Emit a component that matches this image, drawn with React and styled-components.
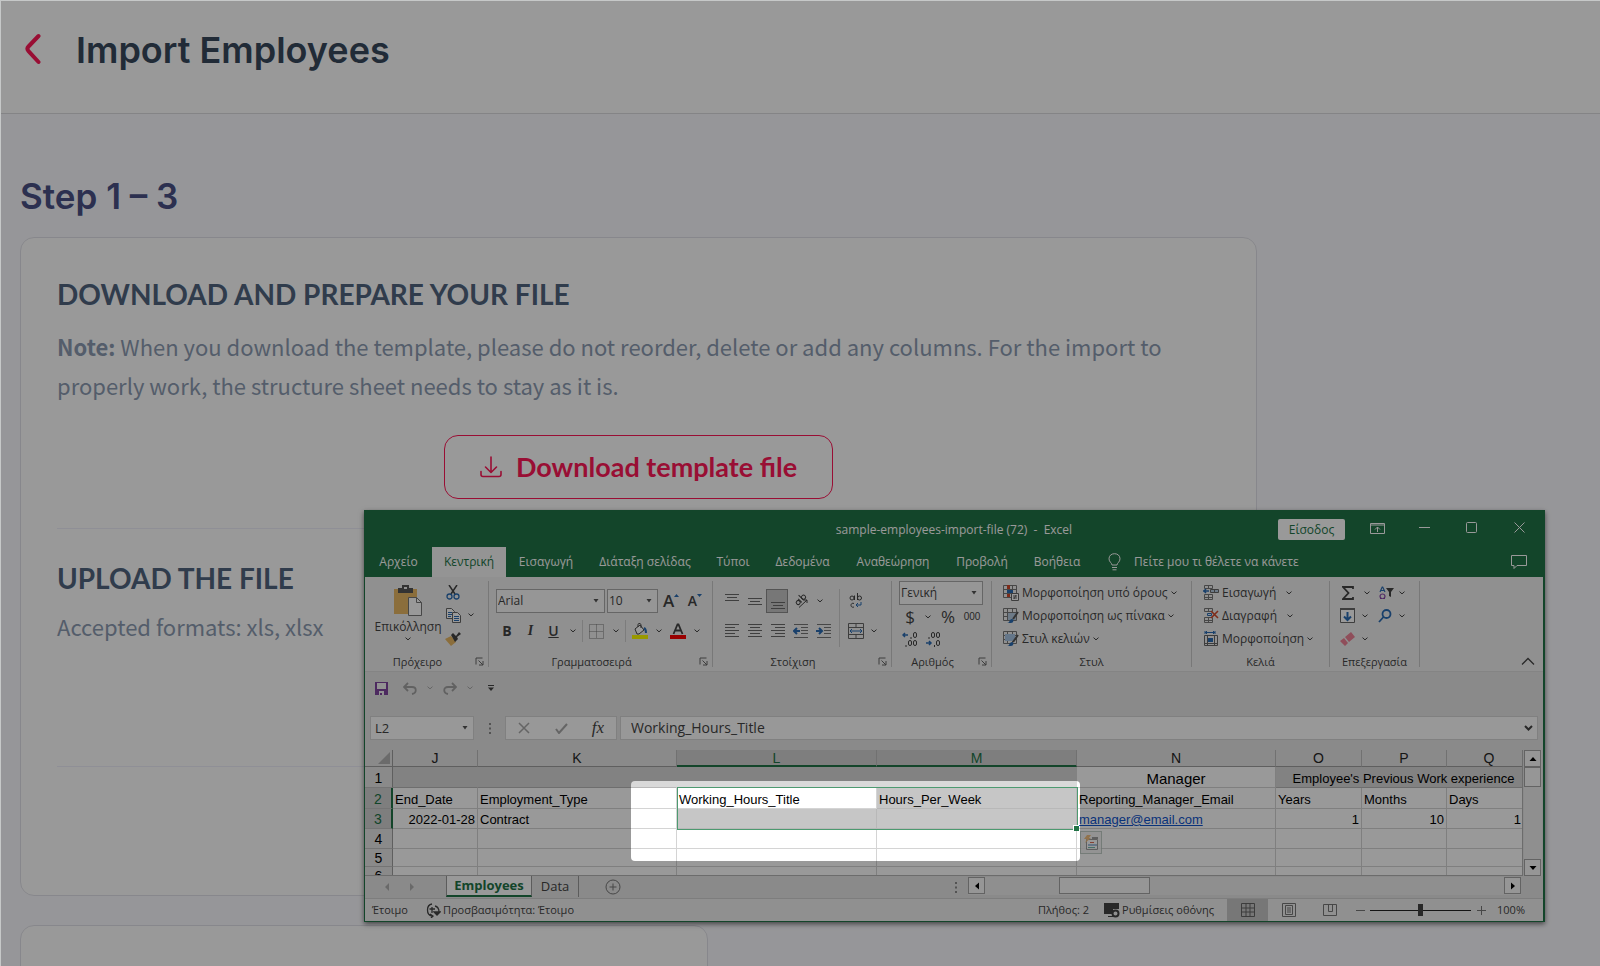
import React from "react";
import styled, { createGlobalStyle, css } from "styled-components";

const color = {
  green: "#217346",
  red: "#ff1857",
  ink: "#444444",
  blue: "#2b6cb3",
  line: "#d4d4d4",
  chrome: "#e6e6e6",
  ribbon: "#f1f1f1",
};

const display = `Inter, "Open Sans", sans-serif`;
const brand = `Lato, "Open Sans", sans-serif`;
const copy = `"Noto Sans CJK JP", "Open Sans", sans-serif`;
const office = `"Open Sans", "Noto Sans", sans-serif`;
const cellFont = `"Liberation Sans", Arial, sans-serif`;

const GlobalStyle = createGlobalStyle`
  *, *::before, *::after { box-sizing: border-box; }
  body { margin: 0; font-family: ${office}; background: #fbfbff; }
  h1, h2, h3, p { margin: 0; }
  button, input, select { font: inherit; color: inherit; }
  svg { display: block; flex: none; }
`;

/* ---------- import page ---------- */

const Page = styled.div`
  position: relative;
  height: 100vh;
  overflow: hidden;
  border-top: 1px solid #c6c8c8;
  border-left: 1px solid #c6c8c8;
  background: #fbfbff;
`;

const Header = styled.header`
  display: flex;
  align-items: flex-start;
  gap: 34px;
  height: 113px;
  padding: 25px 23px;
  background: #ffffff;
  border-bottom: 1px solid #dcdce0;
`;

const BackButton = styled.button`
  display: grid;
  place-items: center;
  width: 18px;
  height: 46px;
  padding: 0;
  border: 0;
  background: none;
`;

const Title = styled.h1`
  font: 600 36px/48px ${display};
  color: #38495d;
`;

const Content = styled.main`
  padding: 58px 19px 0;
`;

const Step = styled.h2`
  font: 600 35px/48px ${display};
  color: #4a5085;
`;

const Card = styled.section`
  width: ${(p) => p.$width};
  min-height: ${(p) => p.$height}px;
  margin-top: ${(p) => p.$gap}px;
  padding: 36px;
  border: 1px solid #e2e2ea;
  border-radius: 14px;
  background: #ffffff;
`;

const CardTitle = styled.h3`
  font: 700 28px/40px ${brand};
  color: #50657f;
`;

const Copy = styled.p`
  margin-top: ${(p) => p.$gap}px;
  font: 400 22px/39px ${copy};
  color: #8d9cb2;
`;

const Divider = styled.hr`
  margin: ${(p) => p.$above}px 0 0;
  border: 0;
  border-top: 1px solid #efeffa;
`;

const UploadBlock = styled.div`
  padding-top: 29px;
`;

const DownloadButton = styled.button`
  display: flex;
  align-items: center;
  justify-content: center;
  gap: 14px;
  width: 389px;
  height: 64px;
  margin: 30px auto 0;
  padding: 0;
  border: 1px solid ${color.red};
  border-radius: 14px;
  background: none;
  font: 700 27px/32px ${brand};
  color: ${color.red};
`;

/* ---------- spreadsheet window ---------- */

const Window = styled.section`
  position: absolute;
  top: 509px;
  left: 363px;
  right: 55px;
  border: 1px solid ${color.green};
  border-right-width: 2px;
  background: ${color.chrome};
  box-shadow: 0 2px 5px rgba(0, 0, 0, 0.55);
  font: 400 12px/16px ${office};
  color: ${color.ink};
`;

const Spotlight = styled.div`
  position: absolute;
  top: 270px;
  left: 266px;
  width: 449px;
  height: 80px;
  border-radius: 4px;
  box-shadow: 0 0 0 3000px rgba(0, 0, 0, 0.4);
  pointer-events: none;
`;

const TitleBar = styled.div`
  display: grid;
  grid-template-columns: 1fr auto 1fr;
  height: 36px;
  background: ${color.green};
  color: #ffffff;
`;

const FileName = styled.div`
  padding-top: 11px;
  white-space: pre;
`;

const WindowControls = styled.div`
  display: flex;
  justify-content: flex-end;
  align-items: flex-start;
  padding-top: 8px;
`;

const SignIn = styled.button`
  width: 67px;
  height: 21px;
  margin-right: 8px;
  padding: 0;
  border: 0;
  border-radius: 2px;
  background: #ffffff;
  font: 400 12px/20px ${office};
  color: ${color.green};
`;

const Tool = styled.button`
  display: flex;
  align-items: center;
  justify-content: center;
  flex: none;
  width: ${(p) => p.$w}px;
  height: ${(p) => p.$h || 24}px;
  padding: 0;
  border: ${(p) => (p.$active ? "1px solid #8c8c8c" : "0")};
  background: ${(p) => (p.$active || p.$shaded ? "#c6c6c6" : "none")};
`;

const Tabs = styled.nav`
  display: flex;
  height: 30px;
  padding-right: 12px;
  background: ${color.green};
  color: #ffffff;
`;

const Tab = styled.button`
  width: ${(p) => p.$w}px;
  padding: 0;
  border: 0;
  background: ${(p) => (p.$active ? "#f7f7f7" : "none")};
  color: ${(p) => (p.$active ? color.green : "#ffffff")};
  font: 400 12px/28px ${office};
  white-space: nowrap;
`;

const TellMe = styled.label`
  display: flex;
  align-items: center;
  gap: 13px;
  flex: 1;
  padding-left: 15px;
  input {
    flex: 1;
    min-width: 0;
    padding: 0;
    border: 0;
    background: none;
    font: 400 12px/16px ${office};
  }
  input::placeholder { color: #ffffff; opacity: 1; }
`;

const Ribbon = styled.div`
  display: flex;
  height: 94px;
  padding: 4px 0;
  background: ${color.ribbon};
`;

const GroupBox = styled.div`
  display: flex;
  flex-direction: column;
  flex: none;
  width: ${(p) => p.$w}px;
  height: 86px;
  border-right: 1px solid #c8c8c8;
`;

const GroupBody = styled.div`
  display: flex;
  flex: 1;
  flex-direction: ${(p) => (p.$row ? "row" : "column")};
  padding: ${(p) => p.$pad};
  gap: ${(p) => p.$gap || 0}px;
`;

const GroupFoot = styled.div`
  display: flex;
  height: 12px;
  font-size: 11px;
  line-height: 14px;
  span { flex: 1; text-align: center; }
`;

const Row = styled.div`
  display: flex;
  align-items: center;
  height: ${(p) => p.$h || 24}px;
  padding-left: ${(p) => p.$left || 0}px;
`;

const Column = styled.div`
  display: flex;
  flex-direction: column;
  width: ${(p) => p.$w}px;
  gap: ${(p) => p.$gap || 0}px;
`;

const Rule = styled.i`
  width: 1px;
  height: ${(p) => p.$h || 22}px;
  margin: 0 ${(p) => p.$m || 0}px;
  background: #cfcfcf;
`;

const PasteButton = styled.button`
  display: flex;
  flex-direction: column;
  align-items: center;
  width: 76px;
  padding: 4px 0 0 10px;
  border: 0;
  background: none;
  font: 400 12px/20px ${office};
`;

const SelectBox = styled.span`
  display: grid;
  align-items: center;
  width: ${(p) => p.$w}px;
  height: ${(p) => p.$h || 24}px;
  margin-right: 2px;
  border: 1px solid #ababab;
  background: #fbfbfb;
  > * { grid-area: 1 / 1; }
  > svg { justify-self: end; margin-right: 5px; pointer-events: none; }
  select {
    width: 100%;
    padding: 0 1px;
    border: 0;
    appearance: none;
    background: none;
    font: 400 12px/20px ${office};
  }
`;

const Glyph = styled.span`
  font: ${(p) => p.$font};
  text-decoration: ${(p) => (p.$under ? "underline" : "none")};
`;

const Command = styled.button`
  display: flex;
  align-items: center;
  gap: 3px;
  height: 23px;
  padding: 0 0 0 11px;
  border: 0;
  background: none;
  font: 400 12px/20px ${office};
  white-space: nowrap;
`;

const RibbonEnd = styled.div`
  display: flex;
  flex: 1;
  align-items: flex-end;
  justify-content: flex-end;
  padding-right: 3px;
`;

const QuickAccess = styled.div`
  display: flex;
  align-items: flex-start;
  height: 45px;
  padding: 4px 0 0 3px;
  border-top: 1px solid #dcdcdc;
`;

const FormulaBar = styled.div`
  display: flex;
  align-items: center;
  height: 24px;
  padding: 0 5px;
`;

const Field = styled.div`
  display: flex;
  align-items: center;
  flex: ${(p) => (p.$w ? "none" : 1)};
  width: ${(p) => (p.$w ? p.$w + "px" : "auto")};
  height: 24px;
  margin-right: ${(p) => p.$after || 0}px;
  border: 1px solid #d6d6d6;
  background: #fdfdfd;
  input {
    flex: 1;
    min-width: 0;
    padding: 0 0 0 ${(p) => p.$pad || 0}px;
    border: 0;
    background: none;
    font: 400 ${(p) => p.$size || 13}px/20px ${office};
  }
`;

/* ---------- grid ---------- */

const SheetArea = styled.div`
  display: flex;
  height: 126px;
  margin-top: 10px;
  padding-right: 1px;
`;

const SheetView = styled.div`
  position: relative;
  flex: 1;
  min-width: 0;
  overflow: hidden;
  border-right: 1px solid #b4b4b4;
  border-bottom: 1px solid #b4b4b4;
  background: #ffffff;
`;

const Grid = styled.table`
  width: 1167px;
  table-layout: fixed;
  border-collapse: separate;
  border-spacing: 0;
  font: 400 13px/16px ${cellFont};
  color: #000000;
`;

const HeadCell = styled.th`
  height: 17px;
  padding: 0;
  border-right: 1px solid #bdbdbd;
  border-bottom: ${(p) => (p.$on ? `2px solid ${color.green}` : "1px solid #9f9f9f")};
  background: ${(p) => (p.$on ? "#d2d2d2" : color.chrome)};
  font-size: 14px;
  font-weight: 400;
  color: ${(p) => (p.$on ? color.green : "#262626")};
  line-height: 14px;
`;

const Corner = styled.td`
  padding: 0 2px 0 0;
  border-right: 1px solid #9f9f9f;
  border-bottom: 1px solid #9f9f9f;
  background: ${color.chrome};
  svg { margin-left: auto; }
`;

const RowHead = styled.th`
  height: ${(p) => p.$h}px;
  padding: 1px 0 0;
  border-right: ${(p) => (p.$on ? `2px solid ${color.green}` : "1px solid #9f9f9f")};
  border-bottom: 1px solid #c2c2c2;
  background: ${(p) => (p.$on ? "#d2d2d2" : color.chrome)};
  font-size: 14px;
  font-weight: 400;
  line-height: 16px;
  color: ${(p) => (p.$on ? color.green : "#000000")};
`;

const Cell = styled.td`
  padding: 3px ${(p) => p.$endPad || 2}px 0 2px;
  overflow: hidden;
  white-space: nowrap;
  text-align: ${(p) => p.$align || "left"};
  border-right: 1px solid ${color.line};
  border-bottom: 1px solid ${color.line};
  ${(p) => p.$large && css`font-size: 15px;`}
  ${(p) => p.$bar && css`background: #d9d9d9; border-color: #b8b8b8; border-right-color: #d9d9d9;`}
  ${(p) => p.$picked && css`background: #c6c6c6; border-color: #b8b8b8;`}
  a { color: #1155cc; }
`;

const Selection = styled.div`
  position: absolute;
  top: 37px;
  left: 312px;
  width: 401px;
  height: 43px;
  border: 1px solid ${color.green};
  outline: 1px solid #4d9a70;
  outline-offset: -1px;
  &::after {
    content: "";
    position: absolute;
    right: -2px;
    bottom: -2px;
    width: 5px;
    height: 5px;
    background: ${color.green};
    box-shadow: -1px -1px 0 #ffffff;
  }
`;

const SmartTag = styled.button`
  position: absolute;
  top: 81px;
  left: 715px;
  display: grid;
  place-items: center;
  width: 22px;
  height: 23px;
  padding: 0;
  border: 1px solid #b5c4bc;
  background: #f4f4f4;
  opacity: 0.8;
`;

const VScroll = styled.div`
  display: flex;
  flex-direction: column;
  justify-content: space-between;
  width: 18px;
  margin-left: 1px;
  background: #efefef;
`;

const ScrollButton = styled.button`
  display: grid;
  place-items: center;
  width: 17px;
  height: 17px;
  padding: 0;
  border: 1px solid #a6a6a6;
  background: #fbfbfb;
`;

const Thumb = styled.div`
  width: ${(p) => p.$w}px;
  height: ${(p) => p.$h}px;
  border: 1px solid #a6a6a6;
  background: #fbfbfb;
`;

const SheetTabs = styled.div`
  display: flex;
  height: 22px;
  padding-right: 22px;
`;

const SheetTab = styled.button`
  width: ${(p) => p.$w}px;
  height: 21px;
  padding: 0;
  border: 0;
  border-right: 1px solid #999999;
  font: ${(p) => (p.$active ? 700 : 400)} 13px/19px ${office};
  background: none;
  ${(p) => p.$active && css`
    background: #ffffff;
    color: ${color.green};
    border-left: 1px solid #999999;
    border-bottom: 2px solid ${color.green};
  `}
`;

const HScroll = styled.div`
  display: flex;
  width: 553px;
  height: 18px;
  margin: 1px 0;
  background: #efefef;
  > :nth-child(2) { margin-left: 74px; }
  > :last-child { margin-left: auto; }
`;

const Spacer = styled.span`
  flex: ${(p) => (p.$w ? "none" : 1)};
  width: ${(p) => (p.$w ? p.$w + "px" : "auto")};
`;

const StatusBar = styled.footer`
  display: flex;
  align-items: center;
  height: 23px;
  border-top: 1px solid #d0d0d0;
  padding: 0 18px 0 7px;
  background: ${color.ribbon};
  font-size: 11px;
`;

const StatusItem = styled.span`
  display: flex;
  align-items: center;
  gap: 2px;
  margin-right: ${(p) => p.$after || 0}px;
  white-space: nowrap;
`;

const Zoom = styled.input`
  appearance: none;
  width: 101px;
  height: 12px;
  margin: 0 5px;
  background: linear-gradient(#222, #222) center / 100% 1px no-repeat;
  &::-webkit-slider-thumb {
    appearance: none;
    width: 5px;
    height: 12px;
    background: ${color.ink};
  }
`;

/* ---------- drawings ---------- */

const Svg = ({ w = 16, h = w, children, ...rest }) => (
  <svg width={w} height={h} viewBox={`0 0 ${w} ${h}`} fill="none" stroke={color.ink} aria-hidden="true" {...rest}>
    {children}
  </svg>
);

const Chevron = ({ stroke = "#444" }) => (
  <Svg w={6} h={4} stroke={stroke}><path d="M.5.600 3 2.900 5.500.600" /></Svg>
);
const Caret = () => (
  <Svg w={6} h={4} stroke="none"><path d="M.5 0h5L3 3.4z" fill="#555" /></Svg>
);
const Drop = ({ w = 12, h, stroke, label = "More" }) => (
  <Tool $w={w} $h={h} aria-label={label}><Chevron stroke={stroke} /></Tool>
);
const Arrow = ({ dir }) => {
  const turn = { up: 0, right: 90, down: 180, left: 270 }[dir];
  return <Svg w={8} stroke="none"><path d="M4 2 7.5 6h-7z" fill="#000" transform={`rotate(${turn} 4 4)`} /></Svg>;
};
const Launcher = () => (
  <Svg w={9} stroke="#666"><path d="M1 7.500V1h6.500M3.500 3.500 8 8M8 4v4H4" /></Svg>
);
const Lines = ({ rows }) => (
  <Svg w={15} h={16} stroke="#6a6a6a">
    {rows.map(([y, a, b]) => <path key={y} d={`M${a} ${y}.500H${b}`} />)}
  </Svg>
);
const Indent = ({ dir }) => (
  <Svg w={16}>
    <path stroke="#777" d="M1 1.500h14M8 4.500h7M8 7.500h7M8 10.500h7M1 14.500h14" />
    <path stroke={color.blue} strokeWidth="2" d={dir === "in" ? "M0 8h5M3 5l3 3-3 3" : "M2 8h5M4 5 1 8l3 3"} />
  </Svg>
);
const TableIcon = ({ kind }) => (
  <Svg w={16}>
    <path stroke="#777" d="M.500.500h13v12H.500zM.500 4.500h13M.500 8.500h13M4.500.500v12M9.500.500v12" />
    {kind === "rules" && (
      <>
        <path fill="#d1492b" stroke="none" d="M4 0h3v4H4zM4 9h3v3H4z" />
        <path fill={color.blue} stroke="none" d="M4 5h6v3H4z" />
        <path fill="#fff" stroke="#666" d="M8.500 8.500h7v7h-7zM10 11h4M10 13h4M13 10l-2 4" />
      </>
    )}
    {kind !== "rules" && (
      <>
        <path fill={kind === "table" ? "#b6cbe2" : "#a9c6e6"} stroke="none" d={kind === "table" ? "M5 5h8v7H5z" : "M2 3h10v7H2z"} />
        <path stroke="#555" strokeWidth="2" d="m15 4-5 7" />
        <path fill={color.blue} stroke="none" d="M4 15c3 0 2-4 5-4 2 0 2 4-1 4z" />
      </>
    )}
  </Svg>
);
const CellsIcon = ({ kind }) => (
  <Svg w={16}>
    {kind === "format" ? (
      <>
        <path stroke={color.blue} d="M2 1.500h10M2 0v3M12 0v3M4 0 2.500 1.500 4 3M10 0l1.500 1.500L10 3" />
        <path stroke="#666" d="M1.500 4.500h13v10h-13zM4.500 4.500v10M11.500 4.500v10M1.500 12.500h13" />
        <path fill={color.blue} stroke="none" d="M5 7h5v4H5z" />
      </>
    ) : (
      <>
        <path stroke="#777" d="M1.500.500h8v3h-8zM5.500.500v3M1.500 9.500h8v5h-8zM5.500 9.500v5M1.500 12.500h8" />
        {kind === "insert" ? (
          <>
            <path stroke="#666" fill="#b6cbe2" d="M7.500 4.500h8v3h-8zM11.500 4.500v3" />
            <path stroke={color.blue} strokeWidth="1.500" d="M0 6h6M3 4 1 6l2 2" />
          </>
        ) : (
          <>
            <path stroke={color.blue} d="M4.500 5.500h4v2h-4z" />
            <path stroke="#d1492b" strokeWidth="1.600" d="m8 3 7 7M15 3l-7 7" />
          </>
        )}
      </>
    )}
  </Svg>
);
const Paste = () => (
  <Svg w={29} h={32} stroke="none">
    <path fill="#e8b864" d="M0 4h23v25H0z" />
    <path fill="#555" d="M4 3h4V0h7v3h4v5H4z" />
    <path fill="#f1f1f1" d="M10 2h3v2h-3z" />
    <path fill="#fff" stroke="#777" d="M14.500 12.500h8l5 5v13h-13z" />
    <path stroke="#777" d="M22.500 12.500v5h5" />
  </Svg>
);
const Cut = () => (
  <Svg w={14} h={15}>
    <path strokeWidth="1.500" d="M3 0l6 9M11 0 5 9" />
    <circle cx="3.500" cy="11.500" r="2.500" stroke={color.blue} strokeWidth="1.300" />
    <circle cx="10.500" cy="11.500" r="2.500" stroke={color.blue} strokeWidth="1.300" />
  </Svg>
);
const CopyIcon = () => (
  <Svg w={15} stroke="#666">
    <path fill="#fff" d="M.500.500h5l3 3v7h-8z" />
    <path stroke={color.blue} d="M2 4.500h4M2 6.500h4M2 8.500h3" />
    <path fill="#fff" d="M6.500 4.500h5l3 3v7h-8z" />
    <path stroke={color.blue} d="M8 8.500h5M8 10.500h5M8 12.500h5" />
  </Svg>
);
const Brush = () => (
  <Svg w={16} stroke="none">
    <path fill="#e8b864" d="m0 8 6-3 5 6-5 4z" />
    <path fill="#444" d="m6 4 2-2 3 3 3-4 2 2-4 3 1 2-3 3z" />
  </Svg>
);
const SortIcon = () => (
  <Svg w={15} h={14}>
    <path stroke={color.blue} strokeWidth="1.200" d="m1 6 2.200-5h.500L6 6M2 4.500h3" />
    <path stroke="#8646a8" strokeWidth="1.200" d="M1 12.500h1.500C0 11 1 8 3.500 8s3.500 3 1 4.500H6" />
    <path fill="#444" stroke="none" d="M7 2h8l-3 4v5l-2-1V6z" />
  </Svg>
);

/* ---------- pieces ---------- */

const Group = ({ w, label, launcher, children, ...body }) => (
  <GroupBox $w={w}>
    <GroupBody {...body}>{children}</GroupBody>
    <GroupFoot>
      <span>{label}</span>
      {launcher && <Tool $w={18} $h={12} aria-label={`${label} options`}><Launcher /></Tool>}
    </GroupFoot>
  </GroupBox>
);

const Picker = ({ w, h, label, value }) => (
  <SelectBox $w={w} $h={h}>
    <select aria-label={label} defaultValue={value}><option>{value}</option></select>
    <Caret />
  </SelectBox>
);

const full = [1, 4, 7, 10, 13];
const wide = (a, b) => full.map((y, i) => (i % 2 ? [y, a, b] : [y, 1, 15]));

const tabs = [
  ["Αρχείο", 67], ["Κεντρική", 74], ["Εισαγωγή", 80], ["Διάταξη σελίδας", 118], ["Τύποι", 58],
  ["Δεδομένα", 81], ["Αναθεώρηση", 100], ["Προβολή", 78], ["Βοήθεια", 72],
];

const columns = [["J", 85], ["K", 199], ["L", 200], ["M", 200], ["N", 199], ["O", 86], ["P", 85], ["Q", 85]];

function RibbonBar() {
  return (
    <Ribbon>
      <Group w={124} label="Πρόχειρο" launcher $row>
        <PasteButton><Paste />Επικόλληση<Chevron /></PasteButton>
        <Column $w={40}>
          <Tool $w={24} $h={22} aria-label="Cut"><Cut /></Tool>
          <Row><Tool $w={24} aria-label="Copy"><CopyIcon /></Tool><Drop w={12} /></Row>
          <Tool $w={24} aria-label="Format painter"><Brush /></Tool>
        </Column>
      </Group>

      <Group w={224} label="Γραμματοσειρά" launcher $pad="8px 0 0" $gap={6}>
        <Row $left={7}>
          <Picker w={109} label="Font" value="Arial" />
          <Picker w={51} label="Size" value="10" />
          <Tool $w={22}><Glyph $font={`600 17px/20px ${office}`}>A</Glyph><Svg w={5} h={14} stroke="none"><path fill={color.blue} d="M0 3h5L2.500 0z" /></Svg></Tool>
          <Tool $w={26}><Glyph $font={`600 14px/24px ${office}`}>A</Glyph><Svg w={5} h={14} stroke="none"><path fill={color.blue} d="M0 0h5L2.500 3z" /></Svg></Tool>
        </Row>
        <Row $left={6}>
          <Tool $w={24}><Glyph $font={`700 14px/20px ${office}`}>B</Glyph></Tool>
          <Tool $w={23}><Glyph $font={`italic 700 14px/20px "Liberation Serif", serif`}>I</Glyph></Tool>
          <Tool $w={23}><Glyph $under $font={`600 14px/20px ${office}`}>U</Glyph></Tool>
          <Drop w={16} />
          <Rule $m={1} />
          <Tool $w={24} aria-label="Borders"><Svg w={15} stroke="#777" strokeDasharray="1 1"><path d="M.500.500h14v14H.500zM.500 7.500h14M7.500.500v14" /></Svg></Tool>
          <Drop w={16} />
          <Rule $m={1} />
          <Tool $w={26} aria-label="Fill colour">
            <Svg w={16}>
              <path d="m3 6 5-4 4 5-5 4H5zM6 4V1.500C6 0 9 0 9 2v3" fill="#fff" />
              <path stroke={color.blue} strokeWidth="2" d="M12 5c2 1 2 3 2 5" />
              <path fill="#ffff00" stroke="none" d="M0 12h16v4H0z" />
            </Svg>
          </Tool>
          <Drop />
          <Tool $w={26} aria-label="Font colour">
            <Svg w={16}><path strokeWidth="1.800" d="m3.500 11 4-9.500h1l4 9.500M5 7.500h6" /><path fill="#ff0000" stroke="none" d="M0 12h16v4H0z" /></Svg>
          </Tool>
          <Drop />
        </Row>
      </Group>

      <Group w={179} label="Στοίχιση" launcher $row $pad="8px 0 0 7px">
        <Column $w={118} $gap={6}>
          <Row>
            <Tool $w={22} aria-label="Top align"><Lines rows={[[1, 1, 15], [4, 3, 13], [7, 1, 15]]} /></Tool>
            <Tool $w={24} aria-label="Middle align"><Lines rows={[[5, 1, 15], [8, 3, 13], [11, 1, 15]]} /></Tool>
            <Tool $w={22} $active aria-label="Bottom align"><Lines rows={[[9, 1, 15], [12, 3, 13], [15, 1, 15]]} /></Tool>
            <Tool $w={26} aria-label="Orientation">
              <Svg w={15} h={14}>
                <g transform="rotate(-45 6 6)">
                  <circle cx="3" cy="6.500" r="2" /><path d="M5.500 4v5M8.500 1.500V9" /><circle cx="10.500" cy="6.500" r="2" />
                </g>
                <path d="M5 13.500 13 6M10 6h3v3" />
              </Svg>
            </Tool>
            <Drop />
          </Row>
          <Row>
            <Tool $w={22} aria-label="Align left"><Lines rows={wide(1, 11)} /></Tool>
            <Tool $w={24} aria-label="Centre"><Lines rows={wide(3, 13)} /></Tool>
            <Tool $w={23} aria-label="Align right"><Lines rows={wide(5, 15)} /></Tool>
            <Tool $w={23} aria-label="Decrease indent"><Indent dir="out" /></Tool>
            <Tool $w={24} aria-label="Increase indent"><Indent dir="in" /></Tool>
          </Row>
        </Column>
        <Rule $h={58} $m={1} />
        <Column $w={46} $gap={6}>
          <Row $left={2}>
            <Tool $w={25} aria-label="Wrap text">
              <Svg w={14} h={16}>
                <circle cx="3" cy="5" r="2" /><path d="M5.500 2.500V7M8.500 0v7" /><circle cx="10.500" cy="5" r="2" />
                <path d="M5 10.500c-4-1.500-4 5 0 3.500" /><path stroke={color.blue} d="M12 9v3H7M9 10l-2 2 2 2" />
              </Svg>
            </Tool>
          </Row>
          <Row $left={2}>
            <Tool $w={25} aria-label="Merge">
              <Svg w={16}><path stroke="#666" d="M.500.500h15v15H.500zM.500 4.500h15M.500 11.500h15M8 .500v4M8 11.500v4" /><path stroke={color.blue} d="M2 8h12M4 6 2 8l2 2M12 6l2 2-2 2" /></Svg>
            </Tool>
            <Drop />
          </Row>
        </Column>
      </Group>

      <Group w={100} label="Αριθμός" launcher $pad="0 0 0 7px">
        <Picker w={84} label="Number format" value="Γενική" />
        <Row $h={23}>
          <Tool $w={22}><Glyph $font={`400 17px/20px ${office}`}>$</Glyph></Tool>
          <Drop w={14} />
          <Tool $w={26}><Glyph $font={`400 17px/20px ${office}`}>%</Glyph></Tool>
          <Tool $w={22}><Glyph $font={`400 10px/20px "Liberation Sans", sans-serif`}>000</Glyph></Tool>
        </Row>
        <Row $h={22}>
          {["M1 4h5M3 2 1 4l2 2", "M1 12h5M4 10l2 2-2 2"].map((d, i) => (
            <Tool key={d} $w={i ? 24 : 22} $h={20} aria-label={i ? "Decrease decimal" : "Increase decimal"}>
              <Svg w={16}>
                <path stroke={color.blue} strokeWidth="1.500" d={d} />
                <rect x="11.500" y="1.500" width="3" height="5" rx="1.500" />
                {i ? <rect x="6.500" y="1.500" width="3" height="5" rx="1.500" /> : <rect x="6.500" y="9.500" width="3" height="5" rx="1.500" />}
                <rect x="11.500" y="9.500" width="3" height="5" rx="1.500" />
                <path d={i ? "M4 6v2M9.500 14v2" : "M9 6v2M4 14v2"} />
              </Svg>
            </Tool>
          ))}
        </Row>
      </Group>

      <Group w={200} label="Στυλ">
        <Command><TableIcon kind="rules" />Μορφοποίηση υπό όρους<Chevron /></Command>
        <Command><TableIcon kind="table" />Μορφοποίηση ως πίνακα<Chevron /></Command>
        <Command><TableIcon kind="style" />Στυλ κελιών<Chevron /></Command>
      </Group>

      <Group w={138} label="Κελιά">
        <Command><CellsIcon kind="insert" />Εισαγωγή<Spacer $w={4} /><Chevron /></Command>
        <Command><CellsIcon kind="delete" />Διαγραφή<Spacer $w={4} /><Chevron /></Command>
        <Command><CellsIcon kind="format" />Μορφοποίηση<Chevron /></Command>
      </Group>

      <Group w={90} label="Επεξεργασία">
        <Row $h={23} $left={6}>
          <Tool $w={24} aria-label="Sum"><Svg w={12} h={14} strokeWidth="1.800"><path d="M11 3V1H1l5.500 6L1 13h10v-2" /></Svg></Tool>
          <Drop w={14} />
          <Tool $w={24} aria-label="Sort and filter"><SortIcon /></Tool>
          <Drop w={8} />
        </Row>
        <Row $h={23} $left={6}>
          <Tool $w={22} aria-label="Fill"><Svg w={15}><path stroke="#666" fill="#fff" d="M.500.500h14v14H.500z" /><path stroke="#666" strokeWidth="2" d="M0 1h15" /><path stroke={color.blue} strokeWidth="2" d="M7.500 4v8M4 8.500l3.500 3.500L11 8.500" /></Svg></Tool>
          <Drop w={14} />
          <Tool $w={26} aria-label="Find"><Svg w={14} stroke={color.blue} strokeWidth="1.800"><circle cx="8.500" cy="5" r="4" /><path d="M5.500 8 1 13" /></Svg></Tool>
          <Drop w={8} />
        </Row>
        <Row $h={23} $left={6}>
          <Tool $w={22} aria-label="Clear"><Svg w={15} h={14} stroke="none"><path fill="#ee8296" d="m5 5 6-5 4 5-6 5zM0 9l4-3 4 5-3 3z" /></Svg></Tool>
          <Drop w={14} />
        </Row>
      </Group>

      <RibbonEnd>
        <Tool $w={24} $h={12} aria-label="Collapse ribbon"><Svg w={14} h={8} strokeWidth="1.300"><path d="m1 7.500 6-6 6 6" /></Svg></Tool>
      </RibbonEnd>
    </Ribbon>
  );
}

function Sheet() {
  return (
    <SheetArea>
      <SheetView>
        <Grid>
          <colgroup>
            <col width="28" />
            {columns.map(([name, w]) => <col key={name} width={w} />)}
          </colgroup>
          <thead>
            <tr>
              <Corner><Svg w={12} stroke="none"><path fill="#b2b2b2" d="M12 0v12H0z" /></Svg></Corner>
              {columns.map(([name]) => (
                <HeadCell key={name} scope="col" $on={name === "L" || name === "M"}>{name}</HeadCell>
              ))}
            </tr>
          </thead>
          <tbody>
            <tr>
              <RowHead $h={21}>1</RowHead>
              <Cell $bar /><Cell $bar /><Cell $bar /><Cell $bar />
              <Cell $large $align="center">Manager</Cell>
              <Cell $bar $align="center" colSpan={3}>Employee's Previous Work experience</Cell>
            </tr>
            <tr>
              <RowHead $h={21} $on>2</RowHead>
              <Cell>End_Date</Cell><Cell>Employment_Type</Cell><Cell>Working_Hours_Title</Cell>
              <Cell $picked>Hours_Per_Week</Cell><Cell>Reporting_Manager_Email</Cell>
              <Cell>Years</Cell><Cell>Months</Cell><Cell>Days</Cell>
            </tr>
            <tr>
              <RowHead $h={20} $on>3</RowHead>
              <Cell $align="right">2022-01-28</Cell><Cell>Contract</Cell><Cell $picked /><Cell $picked />
              <Cell><a href="mailto:manager@email.com">manager@email.com</a></Cell>
              <Cell $align="right">1</Cell><Cell $align="right">10</Cell><Cell $align="right" $endPad={10}>1</Cell>
            </tr>
            {[[4, 20], [5, 18], [6, 18]].map(([n, h]) => (
              <tr key={n}>
                <RowHead $h={h}>{n}</RowHead>
                {columns.map(([name]) => <Cell key={name} />)}
              </tr>
            ))}
          </tbody>
        </Grid>
        <Selection />
        <SmartTag aria-label="Quick analysis">
          <Svg w={15}>
            <path stroke="#888" fill="#fff" d="M2.500 4.500h11v10h-11z" /><path stroke="#888" strokeWidth="2" d="M8 3h6" />
            <path stroke="#d1492b" d="M6 7.500h4" /><path stroke={color.blue} d="M4 10h9" /><path stroke="#5a9" d="M4 12.500h7" />
            <path fill="#f0b060" stroke="none" d="M3 0h4L5 3h2L1 8l2-4H0z" />
          </Svg>
        </SmartTag>
      </SheetView>
      <VScroll>
        <div>
          <ScrollButton aria-label="Scroll up"><Arrow dir="up" /></ScrollButton>
          <Thumb $w={17} $h={20} />
        </div>
        <ScrollButton aria-label="Scroll down"><Arrow dir="down" /></ScrollButton>
      </VScroll>
    </SheetArea>
  );
}

function Spreadsheet() {
  return (
    <Window>
      <TitleBar>
        <span />
        <FileName>{"sample-employees-import-file (72)  -  Excel"}</FileName>
        <WindowControls>
          <SignIn>Είσοδος</SignIn>
          <Tool $w={48} $h={18} aria-label="Ribbon display"><Svg w={15} h={11} stroke="#fff"><path d="M.500.500h14v10H.500zM.500 2h14M7.500 9V4M5 6.500 7.500 4 10 6.500" /></Svg></Tool>
          <Tool $w={47} $h={16} aria-label="Minimise"><Svg w={11} stroke="#fff"><path d="M0 5.500h11" /></Svg></Tool>
          <Tool $w={47} $h={16} aria-label="Maximise"><Svg w={11} stroke="#fff"><rect x=".5" y=".5" width="10" height="10" rx="1" /></Svg></Tool>
          <Tool $w={48} $h={16} aria-label="Close"><Svg w={11} stroke="#fff"><path d="m.500.500 10 10M10.500.500l-10 10" /></Svg></Tool>
        </WindowControls>
      </TitleBar>
      <Tabs>
        {tabs.map(([name, w], i) => <Tab key={name} $w={w} $active={i === 1}>{name}</Tab>)}
        <TellMe>
          <Svg w={13} h={18} stroke="#fff"><path d="M4 12c0-2-3-3-3-6.200C1 2.500 3.500.700 6.500.700S12 2.500 12 5.800C12 9 9 10 9 12zM4 14.500h5M4.500 16.800h4" /></Svg>
          <input aria-label="Tell me" placeholder="Πείτε μου τι θέλετε να κάνετε" />
        </TellMe>
        <Tool $w={24} $h={30} aria-label="Comments"><Svg w={16} h={14} stroke="#fff"><path d="M.500.500h15v10H6l-3 3v-3H.500z" /></Svg></Tool>
      </Tabs>
      <RibbonBar />
      <QuickAccess>
        <Tool $w={26} aria-label="Save"><Svg w={13} stroke="none"><path fill="#8046a0" d="M0 0h13v13H0z" /><path fill="#f4f4f4" d="M2 1h9v6H2zM4 9h5v4H7v-2H5v2H4z" /></Svg></Tool>
        <Tool $w={32} aria-label="Undo"><Svg w={14} h={13} stroke="#a2a2a2" strokeWidth="1.800"><path d="M5 1 1 5l4 4M1 5h8c5 0 5 6 0 7" /></Svg></Tool>
        <Drop w={8} stroke="#aaa" />
        <Tool $w={32} aria-label="Redo"><Svg w={14} h={13} stroke="#a2a2a2" strokeWidth="1.800"><path d="m9 1 4 4-4 4M13 5H5c-5 0-5 6 0 7" /></Svg></Tool>
        <Drop w={8} stroke="#aaa" />
        <Tool $w={34} aria-label="Customise"><Svg w={6} h={6} stroke="none"><path fill="#444" d="M0 0h6v1H0zM0 2.500h6L3 6z" /></Svg></Tool>
      </QuickAccess>
      <FormulaBar>
        <Field $w={104} $pad={4}>
          <input aria-label="Name box" defaultValue="L2" />
          <Tool $w={16} $h={20} aria-label="Names"><Caret /></Tool>
        </Field>
        <Tool $w={31} aria-label="Resize"><Svg w={2} h={11} stroke="#8a8a8a" strokeWidth="2" strokeDasharray="2 2.500"><path d="M1 0v11" /></Svg></Tool>
        <Field $w={112} $after={3}>
          <Tool $w={36} $h={20} aria-label="Cancel"><Svg w={12} stroke="#a8a8a8" strokeWidth="1.500"><path d="m1 1 10 10M11 1 1 11" /></Svg></Tool>
          <Tool $w={38} $h={20} aria-label="Enter"><Svg w={13} h={11} stroke="#a8a8a8" strokeWidth="2"><path d="m1 6 3 4 8-9" /></Svg></Tool>
          <Tool $w={36} $h={20}><Glyph $font={`italic 400 17px/18px "Liberation Serif", serif`}>fx</Glyph></Tool>
        </Field>
        <Field $pad={10} $size={14}>
          <input aria-label="Formula" defaultValue="Working_Hours_Title" />
          <Tool $w={18} $h={20} aria-label="Expand"><Svg w={9} h={6} strokeWidth="2"><path d="m1 1 3.500 3.500L8 1" /></Svg></Tool>
        </Field>
      </FormulaBar>
      <Sheet />
      <SheetTabs>
        <Spacer $w={9} />
        <Tool $w={25} $h={22} aria-label="Previous sheet"><Svg w={4} h={8} stroke="none"><path fill="#b0b0b0" d="M4 0v8L0 4z" /></Svg></Tool>
        <Tool $w={25} $h={22} aria-label="Next sheet"><Svg w={4} h={8} stroke="none"><path fill="#b0b0b0" d="M0 0v8l4-4z" /></Svg></Tool>
        <Spacer $w={22} />
        <SheetTab $w={86} $active>Employees</SheetTab>
        <SheetTab $w={47}>Data</SheetTab>
        <Spacer $w={21} />
        <Tool $w={26} $h={22} aria-label="New sheet"><Svg w={16} stroke="#777"><circle cx="8" cy="8" r="7" /><path d="M8 4.500v7M4.500 8h7" /></Svg></Tool>
        <Spacer />
        <Tool $w={25} $h={22} aria-label="Resize tabs"><Svg w={2} h={11} stroke="#8a8a8a" strokeWidth="2" strokeDasharray="2 2.500"><path d="M1 0v11" /></Svg></Tool>
        <HScroll>
          <ScrollButton aria-label="Scroll left"><Arrow dir="left" /></ScrollButton>
          <Thumb $w={91} $h={17} />
          <ScrollButton aria-label="Scroll right"><Arrow dir="right" /></ScrollButton>
        </HScroll>
      </SheetTabs>
      <StatusBar>
        <StatusItem $after={18}>Έτοιμο</StatusItem>
        <StatusItem>
          <Svg w={15} strokeWidth="1.300"><path d="M6 1C0 2 0 12 6 13M4 11l3 2-2 2M6 4v6M3.500 6H9M9 3c4 1 4 4 4 6" /><path fill={color.ink} d="M8 9h6l-3 3z" /></Svg>
          Προσβασιμότητα: Έτοιμο
        </StatusItem>
        <Spacer />
        <StatusItem $after={15}>Πλήθος: 2</StatusItem>
        <StatusItem $after={13}>
          <Svg w={16} h={15} stroke="none"><path fill="#444" d="M0 0h15v6H9v5H0zM4 13h5v1H4z" /><circle cx="11.500" cy="10.500" r="3" fill="#f1f1f1" stroke="#444" strokeWidth="2" /></Svg>
          Ρυθμίσεις οθόνης
        </StatusItem>
        <Tool $w={41} $h={22} $shaded aria-label="Normal view"><Svg w={14} stroke="#666"><path d="M.500.500h13v13H.500zM.500 5h13M.500 9h13M5 .500v13M9 .500v13" /></Svg></Tool>
        <Tool $w={41} $h={22} aria-label="Page layout"><Svg w={14} stroke="#777"><path d="M.500.500h13v13H.500zM3.500 2.500h7v9h-7zM5 5h4M5 7h4M5 9h4" /></Svg></Tool>
        <Tool $w={41} $h={22} aria-label="Page break"><Svg w={14} h={12} stroke="#777"><path d="M.500 11.500V.500h13v11zM5.500.500v7h4M9.500.500v7" /></Svg></Tool>
        <Spacer $w={5} />
        <Tool $w={10} $h={22} aria-label="Zoom out"><Svg w={9} stroke="#777"><path d="M0 4.500h9" /></Svg></Tool>
        <Zoom type="range" aria-label="Zoom" defaultValue="50" />
        <Tool $w={10} $h={22} aria-label="Zoom in"><Svg w={9} stroke="#777"><path d="M0 4.500h9M4.500 0v9" /></Svg></Tool>
        <Spacer $w={11} />
        <StatusItem>100%</StatusItem>
      </StatusBar>
      <Spotlight />
    </Window>
  );
}

export default function App() {
  return (
    <Page>
      <GlobalStyle />
      <Header>
        <BackButton aria-label="Back">
          <Svg w={18} h={32} stroke={color.red} strokeWidth="4" strokeLinecap="round"><path d="M14.500 3 4.500 13.500c-1.500 1.600-1.500 3 0 4.600L14.500 29" /></Svg>
        </BackButton>
        <Title>Import Employees</Title>
      </Header>
      <Content>
        <Step>Step 1 – 3</Step>
        <Card $width="calc(100% - 324px)" $height={659} $gap={17}>
          <CardTitle>DOWNLOAD AND PREPARE YOUR FILE</CardTitle>
          <Copy $gap={13}>
            <strong>Note:</strong> When you download the template, please do not reorder, delete or add any columns. For the import to properly work, the structure sheet needs to stay as it is.
          </Copy>
          <DownloadButton>
            <Svg w={22} h={22} stroke={color.red} strokeWidth="1.600" strokeLinecap="round" strokeLinejoin="round"><path d="M11 1v15M5.500 11l5.500 5.500 5.500-5.500M1 15.500v3c0 1.500.500 2 2 2h16c1.500 0 2-.500 2-2v-3" /></Svg>
            Download template file
          </DownloadButton>
          <Divider $above={29} />
          <UploadBlock>
            <CardTitle>UPLOAD THE FILE</CardTitle>
            <Copy $gap={9}>Accepted formats: xls, xlsx</Copy>
          </UploadBlock>
          <Divider $above={120} />
        </Card>
        <Card $width="calc(56% - 186px)" $height={120} $gap={29} />
      </Content>
      <Spreadsheet />
    </Page>
  );
}
